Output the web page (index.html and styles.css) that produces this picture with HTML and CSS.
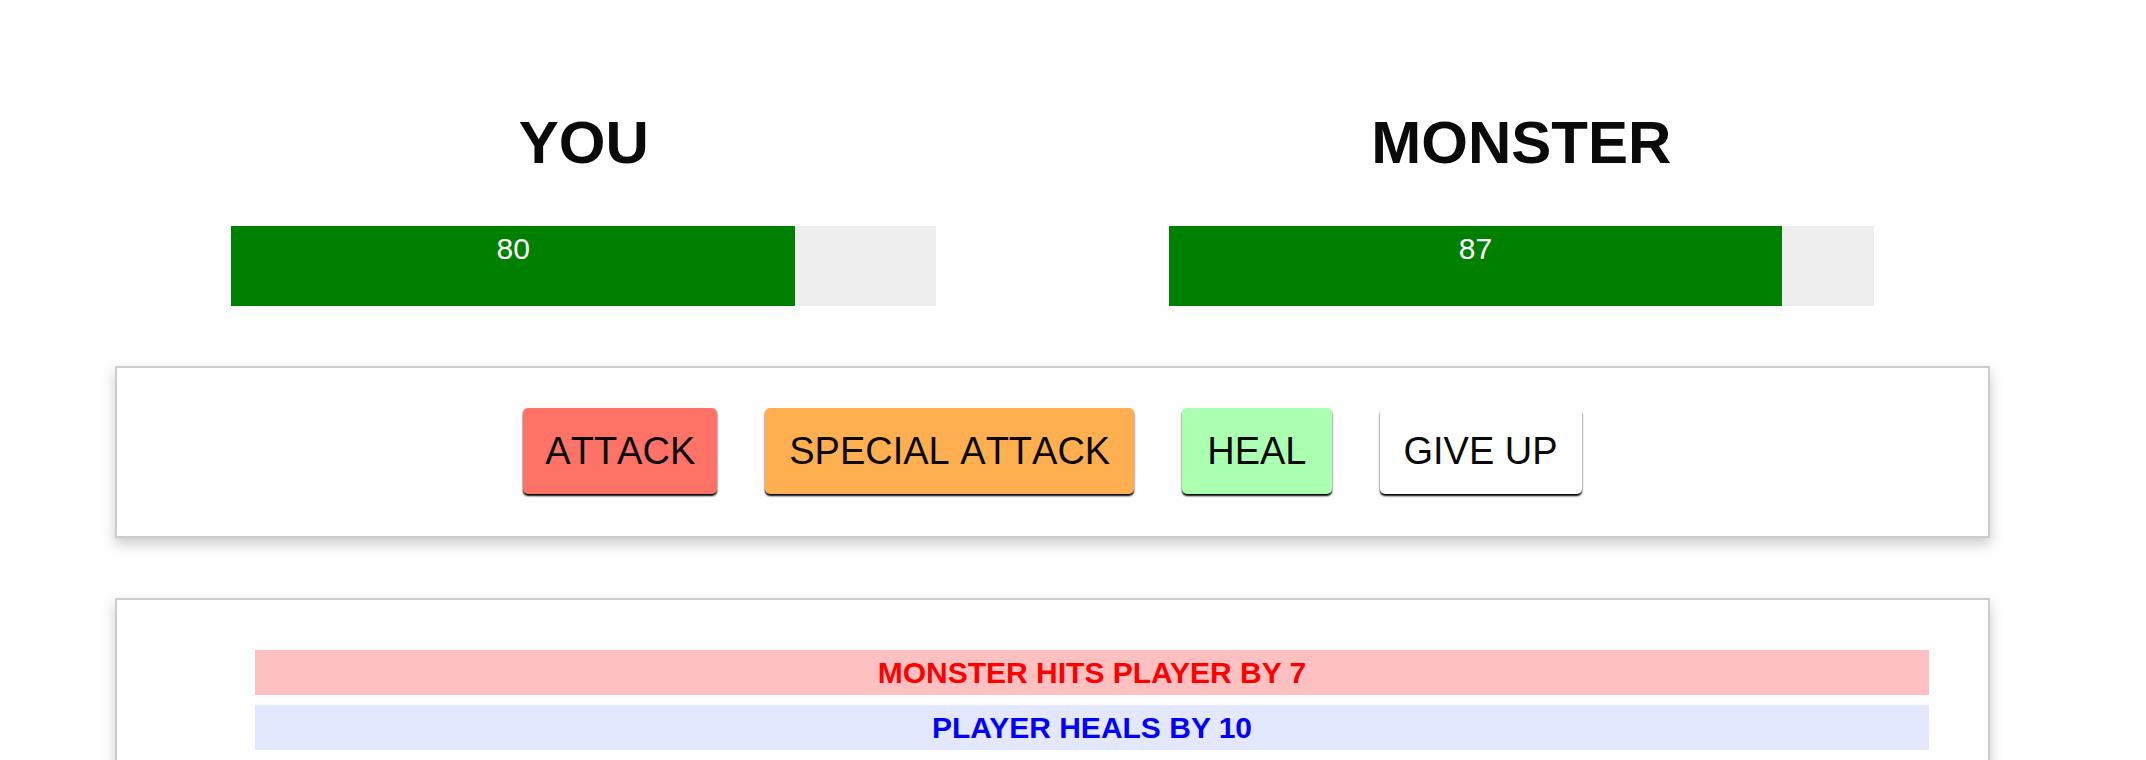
FILE: index.html
```html
<!DOCTYPE html>
<html lang="en">
<head>
<meta charset="utf-8">
<title>Monster Slayer</title>
<link rel="stylesheet" href="styles.css">
</head>
<body>
<div class="app">
  <section class="status">
    <div class="fighter">
      <h1 class="fighter-name">YOU</h1>
      <div class="healthbar">
        <div class="healthbar-value" style="width: 80%">80</div>
      </div>
    </div>
    <div class="fighter">
      <h1 class="fighter-name">MONSTER</h1>
      <div class="healthbar">
        <div class="healthbar-value" style="width: 87%">87</div>
      </div>
    </div>
  </section>
  <section class="panel controls">
    <button class="btn btn-attack">ATTACK</button>
    <button class="btn btn-special">SPECIAL ATTACK</button>
    <button class="btn btn-heal">HEAL</button>
    <button class="btn btn-giveup">GIVE UP</button>
  </section>
  <section class="panel log">
    <ul class="log-list">
      <li class="log-item monster-turn">Monster hits player by 7</li>
      <li class="log-item player-turn">Player heals by 10</li>
    </ul>
  </section>
</div>
</body>
</html>
```
FILE: styles.css
```css
* { box-sizing: border-box; }
html, body { margin: 0; padding: 0; }
body {
  background: #fefefe;
  color: #0a0a0a;
  font-family: "Liberation Sans", Arial, Helvetica, sans-serif;
  height: 760px;
  overflow: hidden;
}
.app {
  width: 1875px;
  margin-left: 115px;
  padding-top: 113px;
}
.status {
  display: grid;
  grid-template-columns: 1fr 1fr;
}
.fighter {
  display: flex;
  flex-direction: column;
  align-items: center;
}
.fighter-name {
  margin: 0 0 53px;
  font-size: 60px;
  line-height: 60px;
  font-weight: bold;
  color: #0a0a0a;
}
.healthbar {
  width: 705px;
  height: 80px;
  background: #eeeeee;
}
.healthbar-value {
  height: 100%;
  background: #008000;
  color: #ffffff;
  text-align: center;
  font-size: 30px;
  line-height: 45px;
}
.panel {
  border: 2px solid #cccccc;
  box-shadow: 0 6px 12px #cccccc;
  background: #fefefe;
}
.controls {
  margin-top: 60px;
  padding: 40px 0 42px;
  display: flex;
  justify-content: center;
  gap: 48px;
}
.btn {
  font-family: "Liberation Sans", Arial, Helvetica, sans-serif;
  font-size: 38px;
  line-height: 38px;
  font-kerning: none;
  height: 86px;
  padding: 0 24px;
  border: 0;
  border-radius: 5px;
  color: #0a0a0a;
  box-shadow: 0 2px 2px #000000;
  cursor: pointer;
}
.btn-attack { background: #ff7367; padding: 0 22px; }
.btn-special { background: #ffaf4f; }
.btn-heal { background: #aaffb0; padding: 0 25px; }
.btn-giveup { background: #ffffff; }
.log {
  margin-top: 60px;
  padding: 50px 59px 20px 138px;
}
.log-list {
  list-style: none;
  margin: 0;
  padding: 0;
  display: flex;
  flex-direction: column;
  gap: 10px;
}
.log-item {
  height: 45px;
  line-height: 45px;
  font-size: 30px;
  font-weight: bold;
  text-transform: uppercase;
  text-align: center;
}
.monster-turn { color: #ff0000; background: #ffc0c1; }
.player-turn { color: #0000ff; background: #e4e8ff; }
```
